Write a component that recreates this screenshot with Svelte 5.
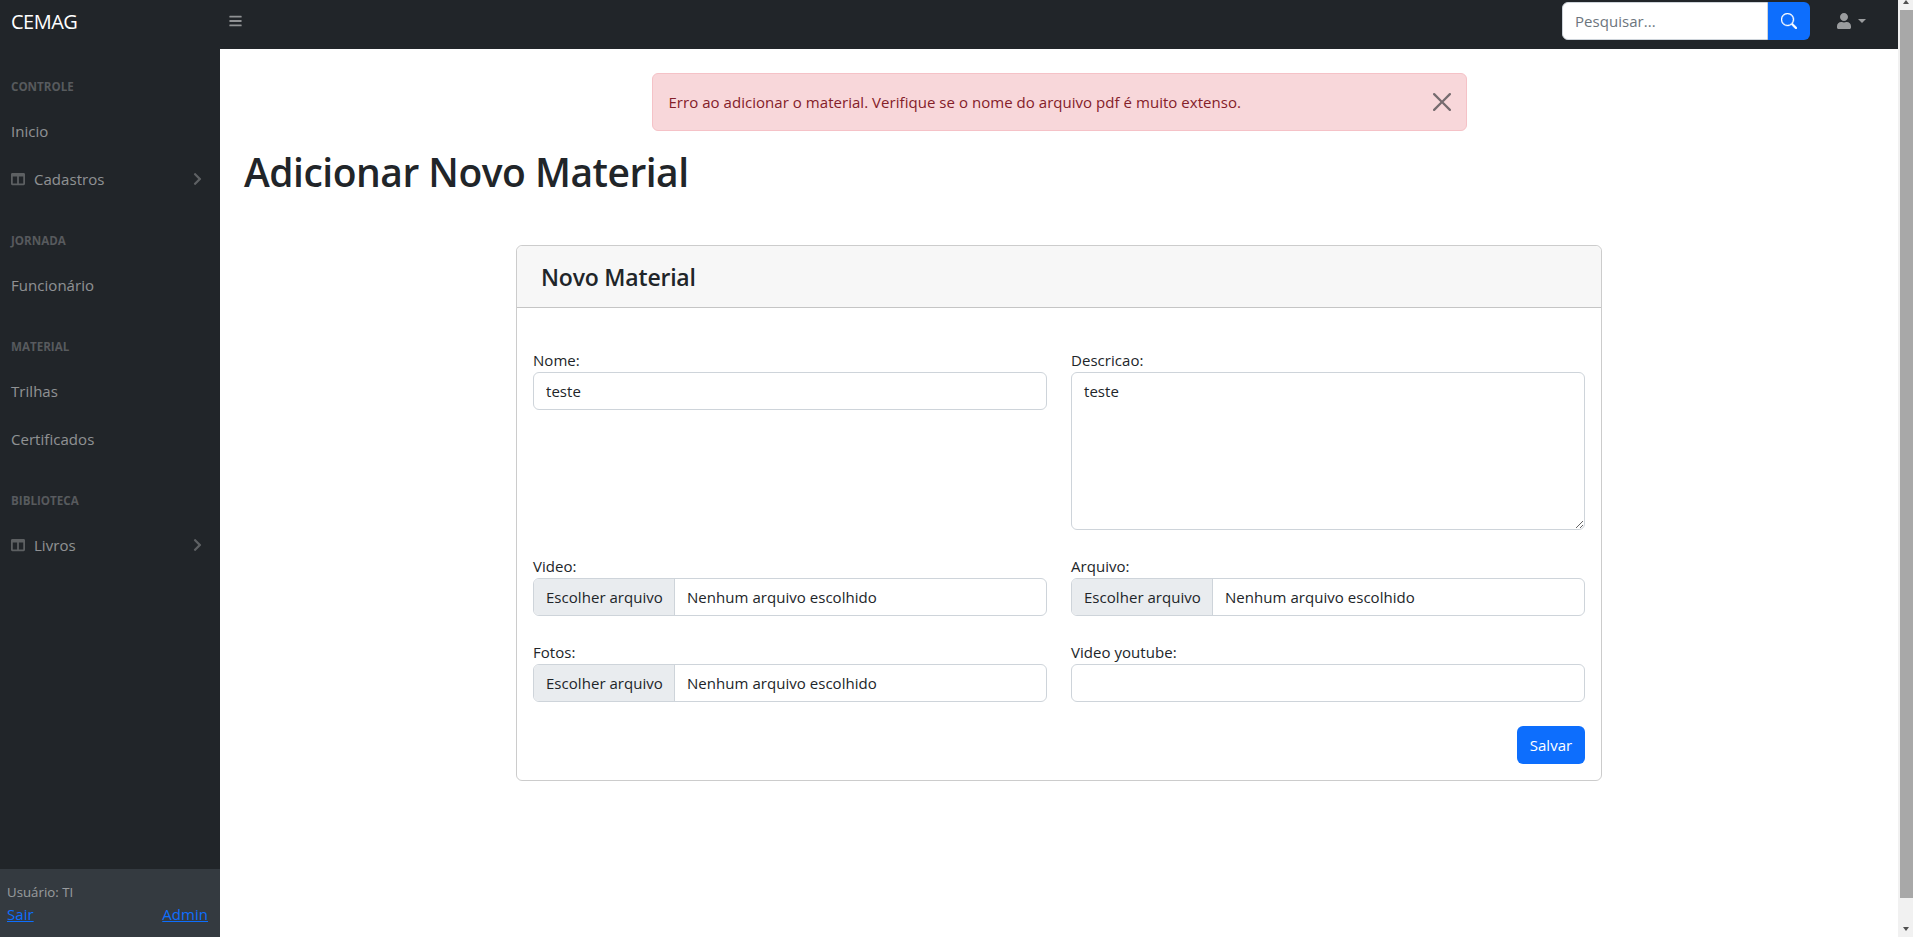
<script>
  const sidebar = [
    { head: 'CONTROLE', items: [{ t: 'Inicio' }, { t: 'Cadastros', icon: true }] },
    { head: 'JORNADA', items: [{ t: 'Funcionário' }] },
    { head: 'MATERIAL', items: [{ t: 'Trilhas' }, { t: 'Certificados' }] },
    { head: 'BIBLIOTECA', items: [{ t: 'Livros', icon: true }] }
  ];
</script>

<div class="shell">
  <div class="page">
    <header class="topnav">
      <div class="brand">CEMAG</div>
      <button class="toggle" aria-label="menu">
        <svg viewBox="0 0 448 512" width="13" height="14"><path fill="currentColor" d="M16 132h416c8.800 0 16-7.200 16-16V76c0-8.800-7.200-16-16-16H16C7.200 60 0 67.200 0 76v40c0 8.800 7.200 16 16 16zm0 160h416c8.800 0 16-7.200 16-16v-40c0-8.800-7.200-16-16-16H16c-8.800 0-16 7.200-16 16v40c0 8.800 7.200 16 16 16zm0 160h416c8.800 0 16-7.200 16-16v-40c0-8.800-7.200-16-16-16H16c-8.800 0-16 7.200-16 16v40c0 8.800 7.200 16 16 16z"/></svg>
      </button>
      <div class="search">
        <input placeholder="Pesquisar..." />
        <button aria-label="buscar">
          <svg viewBox="0 0 16 16" width="16" height="16"><path fill="currentColor" stroke="currentColor" stroke-width=".4" d="M11.742 10.344a6.500 6.500 0 1 0-1.397 1.398h-.001c.03.04.062.078.098.115l3.850 3.850a1 1 0 0 0 1.415-1.414l-3.850-3.850a1.007 1.007 0 0 0-.115-.1zM12 6.500a5.500 5.500 0 1 1-11 0 5.500 5.500 0 0 1 11 0z"/></svg>
        </button>
      </div>
      <div class="user">
        <svg viewBox="0 0 448 512" width="14" height="16"><path fill="currentColor" d="M224 256c70.700 0 128-57.300 128-128S294.700 0 224 0 96 57.300 96 128s57.300 128 128 128zm89.600 32h-16.700c-22.200 10.200-46.900 16-72.900 16s-50.600-5.800-72.900-16h-16.700C60.200 288 0 348.200 0 422.400V464c0 26.500 21.500 48 48 48h352c26.500 0 48-21.500 48-48v-41.600c0-74.200-60.200-134.400-134.400-134.400z"/></svg>
        <span class="caret"></span>
      </div>
    </header>

    <div class="below">
      <nav class="side">
        <div class="menu">
          {#each sidebar as sec}
            <div class="head">{sec.head}</div>
            {#each sec.items as it}
              <div class="link">
                {#if it.icon}
                  <svg class="ico" viewBox="0 0 512 512" width="14" height="14"><path fill="currentColor" d="M464 32H48C21.490 32 0 53.490 0 80v352c0 26.510 21.490 48 48 48h416c26.510 0 48-21.490 48-48V80c0-26.510-21.490-48-48-48zM224 416H64V160h160v256zm224 0H288V160h160v256z"/></svg>
                {/if}
                <span class="lbl">{it.t}</span>
                {#if it.icon}
                  <svg class="chev" viewBox="0 0 320 512" width="9" height="14"><path fill="currentColor" d="M285.500 273L91.100 467.300c-9.400 9.400-24.600 9.400-33.900 0l-22.700-22.700c-9.400-9.400-9.400-24.500 0-33.900L188.500 256 34.500 101.300c-9.300-9.400-9.300-24.500 0-33.900l22.700-22.700c9.400-9.400 24.600-9.400 33.900 0L285.500 239c9.400 9.400 9.400 24.600 0 34z"/></svg>
                {/if}
              </div>
            {/each}
          {/each}
        </div>
        <div class="foot">
          <div class="who">Usuário: TI</div>
          <div class="foot-links"><a href="#sair">Sair</a><a href="#admin">Admin</a></div>
        </div>
      </nav>

      <main class="content">
        <div class="alert">
          <span>Erro ao adicionar o material. Verifique se o nome do arquivo pdf é muito extenso.</span>
          <svg class="close" viewBox="0 0 16 16"><path fill="currentColor" d="M.293.293a1 1 0 0 1 1.414 0L8 6.586 14.293.293a1 1 0 1 1 1.414 1.414L9.414 8l6.293 6.293a1 1 0 0 1-1.414 1.414L8 9.414l-6.293 6.293a1 1 0 0 1-1.414-1.414L6.586 8 .293 1.707a1 1 0 0 1 0-1.414z"/></svg>
        </div>
        <h1>Adicionar Novo Material</h1>
        <section class="card">
          <div class="card-head"><h2>Novo Material</h2></div>
          <div class="card-body">
            <div class="grid">
              <div class="field"><label for="nome">Nome:</label><input id="nome" class="ctl" value="teste" /></div>
              <div class="field"><label for="desc">Descricao:</label><textarea id="desc" class="ctl ta">teste</textarea></div>
              <div class="field"><span class="lab">Video:</span><div class="ctl file"><span class="fbtn">Escolher arquivo</span><span class="fname">Nenhum arquivo escolhido</span></div></div>
              <div class="field"><span class="lab">Arquivo:</span><div class="ctl file"><span class="fbtn">Escolher arquivo</span><span class="fname">Nenhum arquivo escolhido</span></div></div>
              <div class="field"><span class="lab">Fotos:</span><div class="ctl file"><span class="fbtn">Escolher arquivo</span><span class="fname">Nenhum arquivo escolhido</span></div></div>
              <div class="field"><label for="yt">Video youtube:</label><input id="yt" class="ctl" /></div>
            </div>
            <div class="actions"><button class="save">Salvar</button></div>
          </div>
        </section>
      </main>
    </div>
  </div>

  <div class="scrollbar">
    <span class="arrow up"></span>
    <span class="thumb"></span>
    <span class="arrow down"></span>
  </div>
</div>

<style>
  :global(body) { margin: 0; background: #fff; overflow: hidden; }
  * { box-sizing: border-box; }
  .shell {
    display: flex; height: 937px; width: 1913px; overflow: hidden;
    font-family: "Open Sans", "Noto Sans", sans-serif; font-size: 15px; color: #212529;
    letter-spacing: 0.04px;
  }
  .page { flex: 1; min-width: 0; display: flex; flex-direction: column; }
  .topnav { height: 49px; background: #212529; display: flex; align-items: flex-start; flex: none; }
  .brand { width: 220px; padding-left: 11px; color: #fff; font-size: 20px; letter-spacing: -0.5px; line-height: 44px; }
  .toggle { background: none; border: 0; color: rgba(255,255,255,.5); padding: 0; margin: 14px 0 0 9px; display: flex; }
  .search { margin: 2px 0 0 auto; display: flex; height: 38px; }
  .search input { width: 206px; border: 1px solid #ced4da; border-radius: 6px 0 0 6px; padding: 0 12px; font: inherit; letter-spacing: inherit; outline: 0; }
  .search input::placeholder { color: #6c757d; }
  .search button { width: 42px; background: #0d6efd; color: #fff; border: 0; border-radius: 0 6px 6px 0; display: flex; align-items: center; justify-content: center; padding: 0; }
  .user { width: 88px; padding-left: 27px; height: 42px; color: rgba(255,255,255,.55); display: flex; align-items: center; gap: 7px; }
  .caret { width: 0; height: 0; border: 4px solid transparent; border-top-color: currentColor; border-bottom: 0; }

  .below { flex: 1; display: flex; min-height: 0; }
  .side { width: 220px; flex: none; background: #212529; display: flex; flex-direction: column; }
  .menu { flex: 1; }
  .head { font-size: 11.600px; font-weight: 700; color: rgba(255,255,255,.25); padding: 30px 11px 0; height: 58px; line-height: 16px; letter-spacing: 0; }
  .link { height: 48px; display: flex; align-items: center; padding: 0 18px 0 11px; color: rgba(255,255,255,.5); }
  .ico { margin-right: 9px; color: rgba(255,255,255,.27); }
  .chev { margin-left: auto; opacity: .55; }
  .foot { height: 68px; background: #343a40; padding: 13px 12px 0 7px; color: rgba(255,255,255,.5); font-size: 13.200px; }
  .who { line-height: 21px; }
  .foot-links { display: flex; justify-content: space-between; line-height: 22px; font-size: 15px; }
  .foot-links a { color: #0d6efd; }

  .content { flex: 1; min-width: 0; padding: 24px 24px 0; }
  .alert {
    width: 815px; height: 58px; margin: 0 auto;
    background: #f8d7da; border: 1px solid #f5c2c7; border-radius: 6px; color: #842029;
    display: flex; align-items: center; justify-content: space-between; padding: 0 16px;
  }
  .close { color: #212529; opacity: .6; width: 18px; height: 18px; margin-right: -1px; }
  h1 { margin: 17px 0 0; font-size: 39px; font-weight: 600; line-height: 48px; letter-spacing: -0.5px; }
  .card { width: 1086px; margin: 49px auto 0; border: 1px solid rgba(0,0,0,.2); border-radius: 6px; }
  .card-head { background: #f7f7f7; height: 62px; border-bottom: 1px solid rgba(0,0,0,.2); border-radius: 6px 6px 0 0; padding: 0 24px; display: flex; align-items: center; }
  h2 { margin: 0; font-size: 23px; font-weight: 600; letter-spacing: -0.2px; }
  .card-body { padding: 40px 16px 16px; }
  .grid { display: grid; grid-template-columns: 1fr 1fr; column-gap: 24px; row-gap: 24px; }
  .field { display: flex; flex-direction: column; }
  label, .lab { line-height: 24px; height: 24px; display: block; }
  .ctl { width: 100%; height: 38px; border: 1px solid #ced4da; border-radius: 6px; padding: 0 12px; font: inherit; letter-spacing: inherit; color: #212529; background: #fff; outline: 0; }
  .ta { height: 158px; padding-top: 6px; resize: vertical; display: block; line-height: 24px; }
  .file { display: flex; align-items: stretch; padding: 0; overflow: hidden; }
  .fbtn { background: #e9ecef; padding: 0 12px; border-right: 1px solid #ced4da; display: flex; align-items: center; width: 141px; white-space: nowrap; }
  .fname { display: flex; align-items: center; padding-left: 12px; }
  .actions { display: flex; justify-content: flex-end; margin-top: 24px; }
  .save { height: 38px; width: 68px; background: #0d6efd; color: #fff; border: 0; border-radius: 6px; font: inherit; letter-spacing: inherit; padding: 0; }

  .scrollbar { width: 15px; flex: none; background: #f1f1f1; display: flex; flex-direction: column; }
  .arrow { flex: none; position: relative; }
  .arrow.up { height: 10px; }
  .arrow.down { height: 39px; }
  .arrow::after { content: ''; position: absolute; left: 5px; width: 0; height: 0; border: 3.500px solid transparent; }
  .arrow.up::after { top: 0; border-bottom: 4px solid #505050; border-top: 0; }
  .arrow.down::after { bottom: 6px; border-top: 4px solid #505050; border-bottom: 0; }
  .thumb { flex: 1; background: #a8a8a8; margin-left: 2px; }
</style>
